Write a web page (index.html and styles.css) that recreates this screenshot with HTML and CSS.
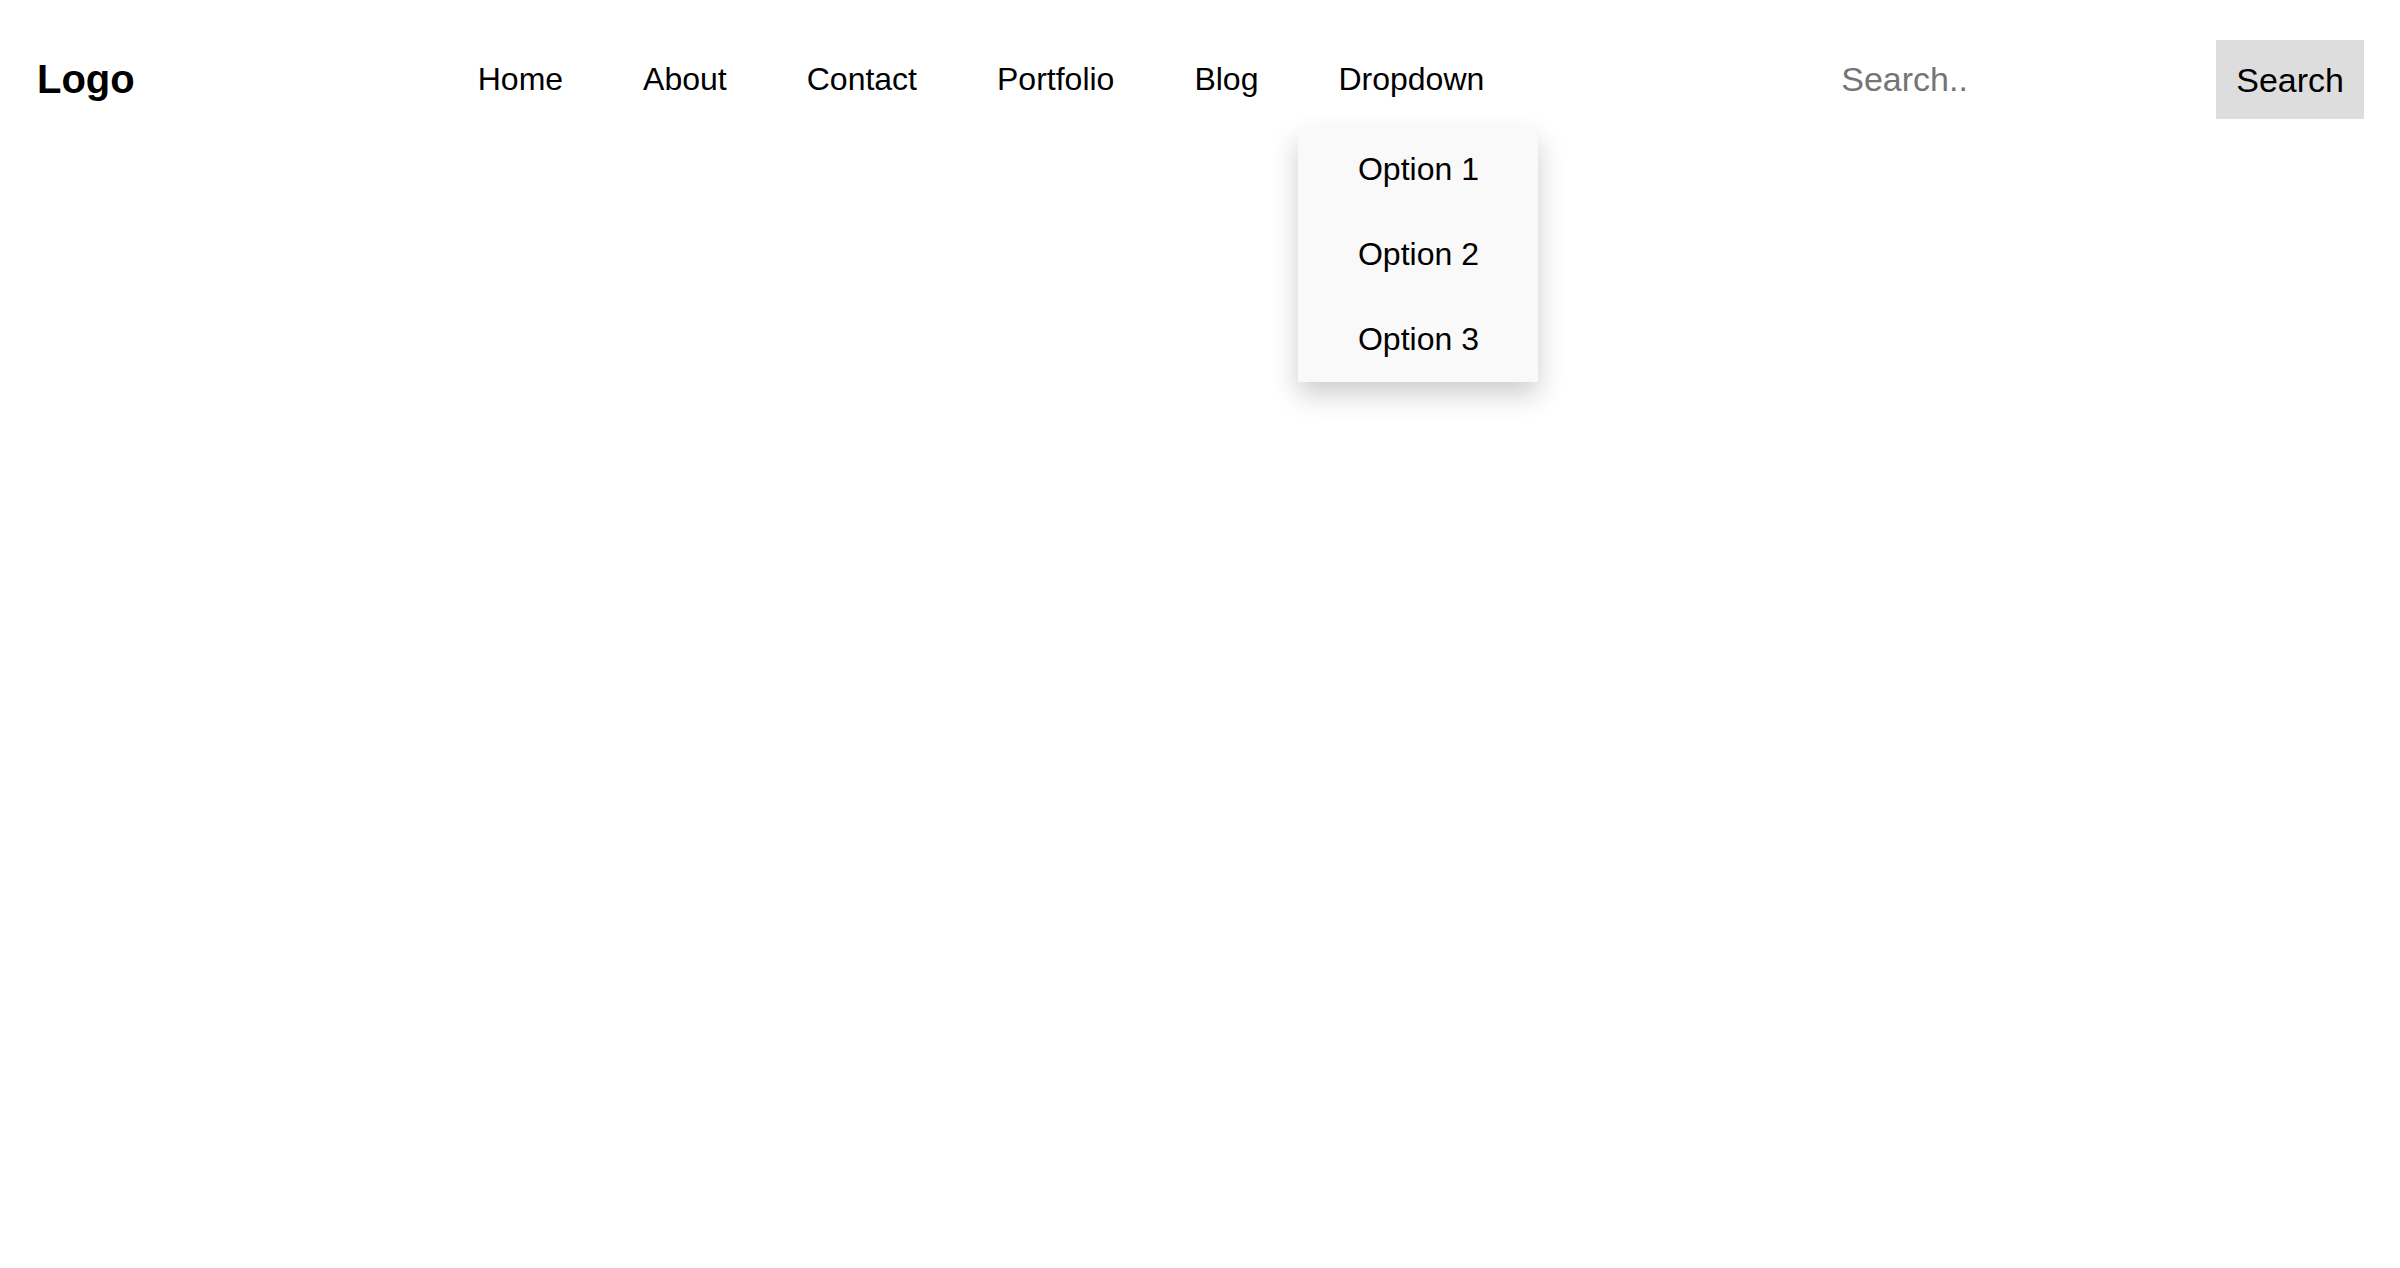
FILE: index.html
```html
<!DOCTYPE html>
<html lang="en">
<head>
<meta charset="utf-8">
<title>Navbar</title>
<link rel="stylesheet" href="styles.css">
</head>
<body>
<div class="page">
<header class="topbar">
  <div class="logo">Logo</div>
  <nav class="nav">
    <ul class="nav-list">
      <li class="nav-item"><a class="nav-link" href="#">Home</a></li>
      <li class="nav-item"><a class="nav-link" href="#">About</a></li>
      <li class="nav-item"><a class="nav-link" href="#">Contact</a></li>
      <li class="nav-item"><a class="nav-link" href="#">Portfolio</a></li>
      <li class="nav-item"><a class="nav-link" href="#">Blog</a></li>
      <li class="nav-item dropdown">
        <a class="nav-link" href="#">Dropdown</a>
        <div class="dropdown-menu">
          <a class="dropdown-link" href="#">Option 1</a>
          <a class="dropdown-link" href="#">Option 2</a>
          <a class="dropdown-link" href="#">Option 3</a>
        </div>
      </li>
    </ul>
  </nav>
  <form class="search" onsubmit="return false">
    <input class="search-input" type="text" placeholder="Search..">
    <button class="search-button" type="submit">Search</button>
  </form>
</header>
</div>
</body>
</html>
```
FILE: styles.css
```css
html, body {
  margin: 0;
  padding: 0;
}

body {
  font-family: "Liberation Sans", Arial, sans-serif;
  color: #000000;
  min-height: 100vh;
  background: #ffffff;
}

.page {
  min-height: 100vh;
}

.topbar {
  display: flex;
  align-items: center;
  height: 159px;
  padding: 0 36px 0 37px;
  box-sizing: border-box;
}

.logo {
  font-size: 40px;
  font-weight: bold;
  line-height: normal;
}

.nav {
  margin-left: 303px;
}

.nav-list {
  display: flex;
  list-style: none;
  margin: 0;
  padding: 0;
}

.nav-item {
  position: relative;
}

.nav-link {
  display: block;
  padding: 29px 40px;
  font-size: 32px;
  line-height: normal;
  color: #000000;
  text-decoration: none;
}

.dropdown-menu {
  position: absolute;
  top: 100%;
  left: 0;
  min-width: 240px;
  background: #f9f9f9;
  box-shadow: 0 12.8px 25.6px 0 rgba(0, 0, 0, 0.2);
  z-index: 1;
}

.dropdown-link {
  display: block;
  padding: 24px 0;
  font-size: 32px;
  line-height: normal;
  text-align: center;
  color: #000000;
  text-decoration: none;
}

.search {
  display: flex;
  align-items: center;
  margin: 0 0 0 auto;
}

.search-input {
  width: 395px;
  box-sizing: border-box;
  padding: 20px;
  border: none;
  outline: none;
  background: transparent;
  font-family: "Liberation Sans", Arial, sans-serif;
  font-size: 34px;
  color: #000000;
}

.search-input::placeholder {
  color: #757575;
}

.search-button {
  padding: 21px 20px 19px;
  border: none;
  border-radius: 0;
  background: #dddddd;
  font-family: "Liberation Sans", Arial, sans-serif;
  font-size: 34px;
  line-height: normal;
  color: #000000;
}
```
